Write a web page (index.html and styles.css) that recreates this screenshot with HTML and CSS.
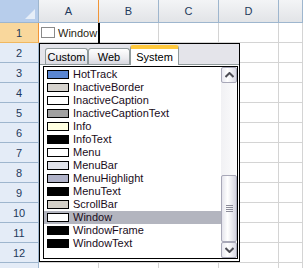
FILE: index.html
```html
<!DOCTYPE html>
<html>
<head>
<meta charset="utf-8">
<link rel="stylesheet" href="styles.css">
</head>
<body>
<div class="sheet">
  <div class="corner"></div>
  <div class="ch sel">A</div><div class="ch">B</div><div class="ch">C</div><div class="ch">D</div><div class="ch"></div>
  <div class="rh sel">1</div><div class="cell a1"><span class="mini"></span>Window</div><div class="cell"></div><div class="cell"></div><div class="cell"></div><div class="cell"></div>
  <div class="rh">2</div><div class="cell"></div><div class="cell"></div><div class="cell"></div><div class="cell"></div><div class="cell"></div>
  <div class="rh">3</div><div class="cell"></div><div class="cell"></div><div class="cell"></div><div class="cell"></div><div class="cell"></div>
  <div class="rh">4</div><div class="cell"></div><div class="cell"></div><div class="cell"></div><div class="cell"></div><div class="cell"></div>
  <div class="rh">5</div><div class="cell"></div><div class="cell"></div><div class="cell"></div><div class="cell"></div><div class="cell"></div>
  <div class="rh">6</div><div class="cell"></div><div class="cell"></div><div class="cell"></div><div class="cell"></div><div class="cell"></div>
  <div class="rh">7</div><div class="cell"></div><div class="cell"></div><div class="cell"></div><div class="cell"></div><div class="cell"></div>
  <div class="rh">8</div><div class="cell"></div><div class="cell"></div><div class="cell"></div><div class="cell"></div><div class="cell"></div>
  <div class="rh">9</div><div class="cell"></div><div class="cell"></div><div class="cell"></div><div class="cell"></div><div class="cell"></div>
  <div class="rh">10</div><div class="cell"></div><div class="cell"></div><div class="cell"></div><div class="cell"></div><div class="cell"></div>
  <div class="rh">11</div><div class="cell"></div><div class="cell"></div><div class="cell"></div><div class="cell"></div><div class="cell"></div>
  <div class="rh">12</div><div class="cell"></div><div class="cell"></div><div class="cell"></div><div class="cell"></div><div class="cell"></div>
  <div class="rh"></div><div class="cell"></div><div class="cell"></div><div class="cell"></div><div class="cell"></div><div class="cell"></div>
</div>

<div class="popup">
  <div class="tabs">
    <div class="tab t-custom">Custom</div>
    <div class="tab t-web">Web</div>
    <div class="tab t-sys on">System</div>
  </div>
  <div class="page">
    <div class="list">
      <div class="items">
        <div class="item"><span class="sw c-hot"></span>HotTrack</div>
        <div class="item"><span class="sw c-ib"></span>InactiveBorder</div>
        <div class="item"><span class="sw c-ic"></span>InactiveCaption</div>
        <div class="item"><span class="sw c-ict"></span>InactiveCaptionText</div>
        <div class="item"><span class="sw c-info"></span>Info</div>
        <div class="item"><span class="sw c-blk"></span>InfoText</div>
        <div class="item"><span class="sw c-menu"></span>Menu</div>
        <div class="item"><span class="sw c-mbar"></span>MenuBar</div>
        <div class="item"><span class="sw c-mhl"></span>MenuHighlight</div>
        <div class="item"><span class="sw c-blk"></span>MenuText</div>
        <div class="item"><span class="sw c-sb"></span>ScrollBar</div>
        <div class="item sel"><span class="sw c-win"></span>Window</div>
        <div class="item"><span class="sw c-blk"></span>WindowFrame</div>
        <div class="item"><span class="sw c-blk"></span>WindowText</div>
      </div>
      <div class="sb">
        <div class="btn"><svg width="9" height="6" viewBox="0 0 9 6"><path d="M0.5 5 L4.5 1 L8.5 5" fill="none" stroke="#4d4d55" stroke-width="2"/></svg></div>
        <div class="track">
          <div class="thumb"><svg width="7" height="7" viewBox="0 0 7 7"><path d="M0 0.5H7M0 2.5H7M0 4.5H7M0 6.5H7" stroke="#8c8c9a" stroke-width="1"/></svg></div>
        </div>
        <div class="btn"><svg width="9" height="6" viewBox="0 0 9 6"><path d="M0.5 1 L4.5 5 L8.5 1" fill="none" stroke="#4d4d55" stroke-width="2"/></svg></div>
      </div>
    </div>
  </div>
</div>
</body>
</html>
```

FILE: styles.css
```css
* { box-sizing: border-box; }
html, body { margin: 0; padding: 0; }
body {
  width: 303px;
  height: 268px;
  overflow: hidden;
  position: relative;
  background: #fff;
  font-family: "Liberation Sans", Arial, sans-serif;
  font-size: 11px;
  color: #000;
}

.sheet {
  display: grid;
  grid-template-columns: 39px repeat(4, 60px) 1fr;
  grid-template-rows: 23px repeat(13, 20px);
  width: 303px;
}

.corner {
  position: relative;
  background: #b7cdeb;
  border-right: 1px solid #9eb6ce;
  border-bottom: 1px solid #9eb6ce;
}
.corner::after {
  content: "";
  position: absolute;
  right: 3px;
  bottom: 3px;
  width: 0;
  height: 0;
  border-left: 10px solid transparent;
  border-bottom: 10px solid #e6eef8;
}

.ch {
  display: flex;
  align-items: center;
  justify-content: center;
  background: linear-gradient(#f3f4f6, #e2e4e7);
  border-right: 1px solid #9eb6ce;
  border-bottom: 1px solid #9eb6ce;
  color: #1e395b;
  font-size: 11px;
}
.ch.sel { border-right-color: #f29536; }

.rh {
  display: flex;
  align-items: center;
  justify-content: center;
  background: #e4ecf7;
  border-right: 1px solid #9eb6ce;
  border-bottom: 1px solid #9eb6ce;
  color: #1e395b;
}
.rh.sel { background: #f9d79c; border-bottom-color: #f0b860; border-right-color: #f29536; }

.cell {
  border-right: 1px solid #d4d4d4;
  border-bottom: 1px solid #d4d4d4;
}
.a1 {
  position: relative;
  display: flex;
  align-items: center;
  padding-left: 2px;
  color: #2a1e10;
}
.a1::after {
  content: "";
  position: absolute;
  top: 0;
  bottom: -1px;
  right: -2px;
  width: 2px;
  background: #000;
}
.mini {
  width: 14px;
  height: 11px;
  border: 1px solid #8a8a8a;
  background: #fff;
  margin-right: 3px;
}

/* popup */
.popup {
  position: absolute;
  left: 39px;
  top: 43px;
  width: 201px;
  height: 219px;
  border: 1px solid #000;
  background: #e4e4ea;
  display: flex;
  flex-direction: column;
}
.tabs {
  display: flex;
  align-items: flex-end;
  height: 20px;
  padding-left: 5px;
}
.tab {
  height: 16px;
  display: flex;
  align-items: center;
  justify-content: center;
  border: 1px solid #919b9c;
  border-bottom: none;
  border-radius: 3px 3px 0 0;
  background: linear-gradient(#ffffff, #ececf0 60%, #d8d8e0);
  color: #000;
  font-size: 11px;
}
.t-custom { width: 43px; }
.t-web { width: 42px; }
.t-sys { width: 49px; }
.tab.on {
  height: 20px;
  background: #fff;
  border-top: 3px solid #ffc83c;
  box-shadow: inset 0 1px 0 #ffc83c;
  position: relative;
  top: 1px;
}
.page {
  flex: 1;
  border-top: 1px solid #919b9c;
  padding: 1px 1px 2px 3px;
  background: #fff;
  display: flex;
}
.list {
  flex: 1;
  border: 1px solid #000;
  display: flex;
  background: #fff;
}
.items {
  flex: 1;
  padding-top: 1px;
  overflow: hidden;
}
.item {
  height: 13px;
  display: flex;
  align-items: center;
  white-space: nowrap;
  color: #1a0c1a;
  line-height: 13px;
}
.item.sel { background: #b3b5bf; }
.sw {
  flex: none;
  width: 22px;
  height: 9px;
  border: 1px solid #000;
  margin: 0 4px 0 3px;
}
.c-hot { background: #5a86d2; }
.c-ib { background: #d6d3ce; }
.c-ic { background: #ffffff; }
.c-ict { background: #a0a0a0; }
.c-info { background: #ffffe1; }
.c-blk { background: #000; }
.c-menu { background: #fff; }
.c-mbar { background: #e1e3ea; }
.c-mhl { background: #b0b2c8; }
.c-sb { background: #d4d0c8; }
.c-win { background: #fff; }

.sb {
  width: 16px;
  display: flex;
  flex-direction: column;
  background: linear-gradient(90deg, #f1f1f4, #fbfbfc);
}
.btn {
  height: 16px;
  display: flex;
  align-items: center;
  justify-content: center;
  border: 1px solid #a8a8b8;
  border-radius: 2px;
  background: linear-gradient(90deg, #e8e8f0, #ffffff 40%, #d8d8e4);
}
.track {
  flex: 1;
  display: flex;
  flex-direction: column;
  justify-content: flex-end;
}
.thumb {
  height: 67px;
  display: flex;
  align-items: center;
  justify-content: center;
  border: 1px solid #a8a8b8;
  border-radius: 2px;
  background: linear-gradient(90deg, #e4e4ec, #ffffff 40%, #d4d4e0);
}
```
